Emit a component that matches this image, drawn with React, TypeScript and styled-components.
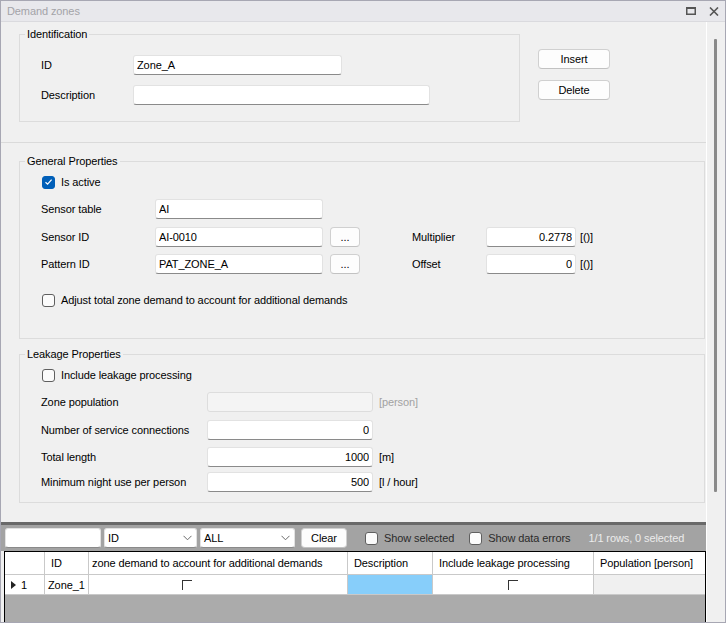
import React from "react";
import styled, { createGlobalStyle } from "styled-components";

const GlobalStyle = createGlobalStyle`
  html, body { margin: 0; padding: 0; background: #f0f0f0; }
  body {
    font-family: "Liberation Sans", Arial, sans-serif;
    font-size: 11px;
    letter-spacing: -0.1px;
    color: #000;
  }
  * { box-sizing: border-box; }
`;

const FONT = `"Liberation Sans", Arial, sans-serif`;

/* ---------- window frame ---------- */

const Window = styled.div`
  width: 726px;
  height: 623px;
  display: flex;
  flex-direction: column;
  border: 1px solid #a7a7b3;
  background: #f0f0f0;
  overflow: hidden;
`;

const TitleBar = styled.div`
  height: 21px;
  flex: none;
  display: flex;
  align-items: center;
  padding: 0 6px 0 6px;
  background: #e8e8ec;
  border-bottom: 1px solid #dadade;
`;

const Title = styled.div`
  flex: 1;
  color: #a3a3a8;
  font-size: 11px;
`;

const TitleButton = styled.div<{ $ml: number }>`
  margin-left: ${(p) => p.$ml}px;
  width: 10px;
  height: 10px;
  display: flex;
  align-items: center;
  justify-content: center;
`;

const Body = styled.div`
  flex: 1;
  display: flex;
  min-height: 0;
`;

const Main = styled.div`
  width: 705px;
  flex: none;
  display: flex;
  flex-direction: column;
`;

const Divider = styled.div`
  width: 1px;
  flex: none;
  background: #ffffff;
`;

const ScrollColumn = styled.div`
  width: 18px;
  flex: none;
  background: #f0f0f0;
`;

const ScrollThumb = styled.div`
  margin: 17px 0 0 7px;
  width: 3px;
  height: 453px;
  background: #8a8a8a;
  border-radius: 1px;
`;

/* ---------- form ---------- */

const FormArea = styled.div`
  height: 500px;
  flex: none;
  display: flex;
  flex-direction: column;
  overflow: hidden;
`;

const TopSection = styled.div`
  display: flex;
  align-items: flex-start;
  margin-top: 5px;
`;

const Group = styled.fieldset<{ $w: number; $mt: number }>`
  margin: ${(p) => p.$mt}px 0 0 18px;
  width: ${(p) => p.$w}px;
  padding: 0;
  border: 1px solid #dcdcdc;
  min-width: 0;
  flex: none;
`;

const Legend = styled.legend`
  margin-left: 5px;
  padding: 0 2px;
  line-height: 14px;
  font-size: 11px;
  color: #000;
`;

const GroupBody = styled.div<{ $pt: number; $pb: number }>`
  display: flex;
  flex-direction: column;
  padding: ${(p) => p.$pt}px 0 ${(p) => p.$pb}px 21px;
`;

const Row = styled.div<{ $mt?: number }>`
  display: flex;
  align-items: center;
  height: 20px;
  margin-top: ${(p) => p.$mt ?? 0}px;
`;

const Label = styled.div<{ $w: number; $ml?: number }>`
  width: ${(p) => p.$w}px;
  margin-left: ${(p) => p.$ml ?? 0}px;
  flex: none;
  white-space: nowrap;
`;

const Field = styled.input<{ $w: number; $right?: boolean }>`
  width: ${(p) => p.$w}px;
  height: 20px;
  flex: none;
  margin: 0;
  padding: 0 3px;
  font-family: ${FONT};
  font-size: 11px;
  letter-spacing: -0.1px;
  color: #000;
  text-align: ${(p) => (p.$right ? "right" : "left")};
  background: #ffffff;
  border: 1px solid #e2e2e2;
  border-bottom-color: #8a8a8a;
  border-radius: 3px;
  outline: none;

  &:disabled {
    background: #f4f4f4;
    border-color: #dddddd;
  }
`;

const Unit = styled.span<{ $dim?: boolean; $ml?: number }>`
  margin-left: ${(p) => p.$ml ?? 4}px;
  color: ${(p) => (p.$dim ? "#a2a2a2" : "#000")};
  white-space: nowrap;
`;

const Button = styled.button<{ $w: number; $h?: number; $ml?: number }>`
  width: ${(p) => p.$w}px;
  height: ${(p) => p.$h ?? 20}px;
  margin: 0 0 0 ${(p) => p.$ml ?? 0}px;
  padding: 0;
  flex: none;
  font-family: ${FONT};
  font-size: 11px;
  letter-spacing: -0.1px;
  color: #000;
  background: #fdfdfd;
  border: 1px solid #d0d0d0;
  border-bottom-color: #c2c2c2;
  border-radius: 4px;
`;

const ButtonColumn = styled.div`
  display: flex;
  flex-direction: column;
  gap: 11px;
  margin: 22px 0 0 18px;
`;

const Separator = styled.div`
  height: 1px;
  margin-top: 20px;
  background: #dadada;
`;

const CheckRow = styled.label<{ $mt?: number }>`
  display: flex;
  align-items: center;
  gap: 6px;
  height: 20px;
  margin-top: ${(p) => p.$mt ?? 0}px;
  padding-left: 1px;
  white-space: nowrap;
`;

const Box = styled.span<{ $on?: boolean }>`
  width: 13px;
  height: 13px;
  flex: none;
  border-radius: 3px;
  border: 1px solid ${(p) => (p.$on ? "#005fb8" : "#5f5f5f")};
  background: ${(p) => (p.$on ? "#005fb8" : "#fbfbfb")};
  display: inline-flex;
  align-items: center;
  justify-content: center;
`;

/* ---------- filter bar ---------- */

const Splitter = styled.div`
  height: 3px;
  flex: none;
  background: #696969;
`;

const FilterBar = styled.div`
  height: 26px;
  flex: none;
  display: flex;
  align-items: center;
  padding-left: 4px;
  background: #a3a3a3;
`;

const Combo = styled.div<{ $w: number; $ml: number }>`
  width: ${(p) => p.$w}px;
  height: 20px;
  margin-left: ${(p) => p.$ml}px;
  flex: none;
  display: flex;
  align-items: center;
  justify-content: space-between;
  padding: 0 4px 0 3px;
  background: #ffffff;
  border: 1px solid #e2e2e2;
  border-bottom-color: #8a8a8a;
  border-radius: 3px;
`;

const BarCheck = styled.label<{ $ml: number }>`
  display: flex;
  align-items: center;
  gap: 6px;
  margin-left: ${(p) => p.$ml}px;
  color: #2b2b2b;
  white-space: nowrap;
`;

const Status = styled.span<{ $ml: number }>`
  margin-left: ${(p) => p.$ml}px;
  color: #ececec;
  white-space: nowrap;
`;

/* ---------- data grid ---------- */

const Grid = styled.div`
  flex: 1;
  margin-left: 3px;
  width: 702px;
  border: 1px solid #000;
  border-bottom: none;
  background: #ababab;
  display: grid;
  grid-template-columns: 40px 44px 259px 85px 161px 1fr;
  grid-template-rows: 23px 20px;
  align-content: start;
`;

const Cell = styled.div<{ $bg?: string; $head?: boolean; $last?: boolean; $pl?: number }>`
  display: flex;
  align-items: ${(p) => (p.$head ? "center" : "flex-start")};
  padding: 0 0 0 ${(p) => p.$pl ?? (p.$head ? 6 : 0)}px;
  background: ${(p) => p.$bg ?? "#ffffff"};
  border-right: ${(p) => (p.$last ? "none" : "1px solid #c9c9c9")};
  border-bottom: 1px solid #c9c9c9;
  white-space: nowrap;
  overflow: hidden;
`;

const RowHeadCell = styled(Cell)`
  align-items: center;
  padding-left: 6px;
  gap: 5px;
`;

const TextCell = styled(Cell)`
  align-items: center;
  padding-left: 3px;
`;

/* the bool column may be scrolled sideways, so the mark sits at a given offset */
const MarkCell = styled(Cell)<{ $offset?: number }>`
  justify-content: ${(p) => (p.$offset === undefined ? "center" : "flex-start")};
  padding-left: ${(p) => p.$offset ?? 0}px;
  padding-top: 5px;
`;

const CornerMark = styled.span`
  width: 10px;
  height: 10px;
  border-top: 1px solid #333;
  border-left: 1px solid #333;
`;

/* ---------- icons ---------- */

const Tick = () => (
  <svg width="9" height="8" viewBox="0 0 9 8">
    <path d="M1.5 4.2 L3.6 6.2 L7.6 1.6" fill="none" stroke="#fff" strokeWidth="1.2" />
  </svg>
);

const Chevron = () => (
  <svg width="9" height="6" viewBox="0 0 9 6">
    <path d="M0.5 0.8 L4.5 4.8 L8.5 0.8" fill="none" stroke="#6a6a6a" strokeWidth="1" />
  </svg>
);

const RowArrow = () => (
  <svg width="5" height="8" viewBox="0 0 5 8">
    <path d="M0 0 L5 4 L0 8 Z" fill="#222" />
  </svg>
);

const MaximizeIcon = () => (
  <svg width="10" height="8" viewBox="0 0 10 8">
    <rect x="0.75" y="1" width="8.5" height="6.25" fill="none" stroke="#555" strokeWidth="1.5" />
    <rect x="0" y="0" width="10" height="2" fill="#555" />
  </svg>
);

const CloseIcon = () => (
  <svg width="10" height="9" viewBox="0 0 10 9">
    <path d="M1 0.5 L9 8.5 M9 0.5 L1 8.5" stroke="#555" strokeWidth="1.6" />
  </svg>
);

/* ---------- page ---------- */

export default function App() {
  return (
    <>
      <GlobalStyle />
      <Window>
        <TitleBar>
          <Title>Demand zones</Title>
          <TitleButton $ml={0}>
            <MaximizeIcon />
          </TitleButton>
          <TitleButton $ml={13}>
            <CloseIcon />
          </TitleButton>
        </TitleBar>

        <Body>
          <Main>
            <FormArea>
              <TopSection>
                <Group $w={501} $mt={0}>
                  <Legend>Identification</Legend>
                  <GroupBody $pt={14} $pb={16}>
                    <Row>
                      <Label $w={92}>ID</Label>
                      <Field $w={209} value="Zone_A" readOnly />
                    </Row>
                    <Row $mt={10}>
                      <Label $w={92}>Description</Label>
                      <Field $w={297} value="" readOnly />
                    </Row>
                  </GroupBody>
                </Group>
                <ButtonColumn>
                  <Button $w={72}>Insert</Button>
                  <Button $w={72}>Delete</Button>
                </ButtonColumn>
              </TopSection>

              <Separator />

              <Group $w={686} $mt={11}>
                <Legend>General Properties</Legend>
                <GroupBody $pt={4} $pb={28}>
                  <CheckRow>
                    <Box $on>
                      <Tick />
                    </Box>
                    Is active
                  </CheckRow>
                  <Row $mt={7}>
                    <Label $w={114}>Sensor table</Label>
                    <Field $w={168} value="AI" readOnly />
                  </Row>
                  <Row $mt={8}>
                    <Label $w={114}>Sensor ID</Label>
                    <Field $w={168} value="AI-0010" readOnly />
                    <Button $w={30} $ml={7}>...</Button>
                    <Label $w={74} $ml={52}>Multiplier</Label>
                    <Field $w={90} $right value="0.2778" readOnly />
                    <Unit>[()]</Unit>
                  </Row>
                  <Row $mt={7}>
                    <Label $w={114}>Pattern ID</Label>
                    <Field $w={168} value="PAT_ZONE_A" readOnly />
                    <Button $w={30} $ml={7}>...</Button>
                    <Label $w={74} $ml={52}>Offset</Label>
                    <Field $w={90} $right value="0" readOnly />
                    <Unit>[()]</Unit>
                  </Row>
                  <CheckRow $mt={16}>
                    <Box />
                    Adjust total zone demand to account for additional demands
                  </CheckRow>
                </GroupBody>
              </Group>

              <Group $w={686} $mt={8}>
                <Legend>Leakage Properties</Legend>
                <GroupBody $pt={4} $pb={10}>
                  <CheckRow>
                    <Box />
                    Include leakage processing
                  </CheckRow>
                  <Row $mt={7}>
                    <Label $w={166}>Zone population</Label>
                    <Field $w={166} value="" disabled readOnly />
                    <Unit $dim $ml={6}>[person]</Unit>
                  </Row>
                  <Row $mt={8}>
                    <Label $w={166}>Number of service connections</Label>
                    <Field $w={166} $right value="0" readOnly />
                  </Row>
                  <Row $mt={7}>
                    <Label $w={166}>Total length</Label>
                    <Field $w={166} $right value="1000" readOnly />
                    <Unit $ml={6}>[m]</Unit>
                  </Row>
                  <Row $mt={5}>
                    <Label $w={166}>Minimum night use per person</Label>
                    <Field $w={166} $right value="500" readOnly />
                    <Unit $ml={6}>[l / hour]</Unit>
                  </Row>
                </GroupBody>
              </Group>
            </FormArea>

            <Splitter />

            <FilterBar>
              <Field $w={96} value="" readOnly />
              <Combo $w={93} $ml={3}>
                ID
                <Chevron />
              </Combo>
              <Combo $w={95} $ml={3}>
                ALL
                <Chevron />
              </Combo>
              <Button $w={46} $ml={6}>Clear</Button>
              <BarCheck $ml={18}>
                <Box />
                Show selected
              </BarCheck>
              <BarCheck $ml={15}>
                <Box />
                Show data errors
              </BarCheck>
              <Status $ml={18}>1/1 rows, 0 selected</Status>
            </FilterBar>

            <Grid>
              <Cell $head />
              <Cell $head>ID</Cell>
              <Cell $head $pl={3}>zone demand to account for additional demands</Cell>
              <Cell $head>Description</Cell>
              <Cell $head>Include leakage processing</Cell>
              <Cell $head $last>Population [person]</Cell>

              <RowHeadCell>
                <RowArrow />1
              </RowHeadCell>
              <TextCell>Zone_1</TextCell>
              <MarkCell $offset={93}>
                <CornerMark />
              </MarkCell>
              <Cell $bg="#87cefa" />
              <MarkCell>
                <CornerMark />
              </MarkCell>
              <Cell $bg="#f0f0f0" $last />
            </Grid>
          </Main>
          <Divider />
          <ScrollColumn>
            <ScrollThumb />
          </ScrollColumn>
        </Body>
      </Window>
    </>
  );
}
